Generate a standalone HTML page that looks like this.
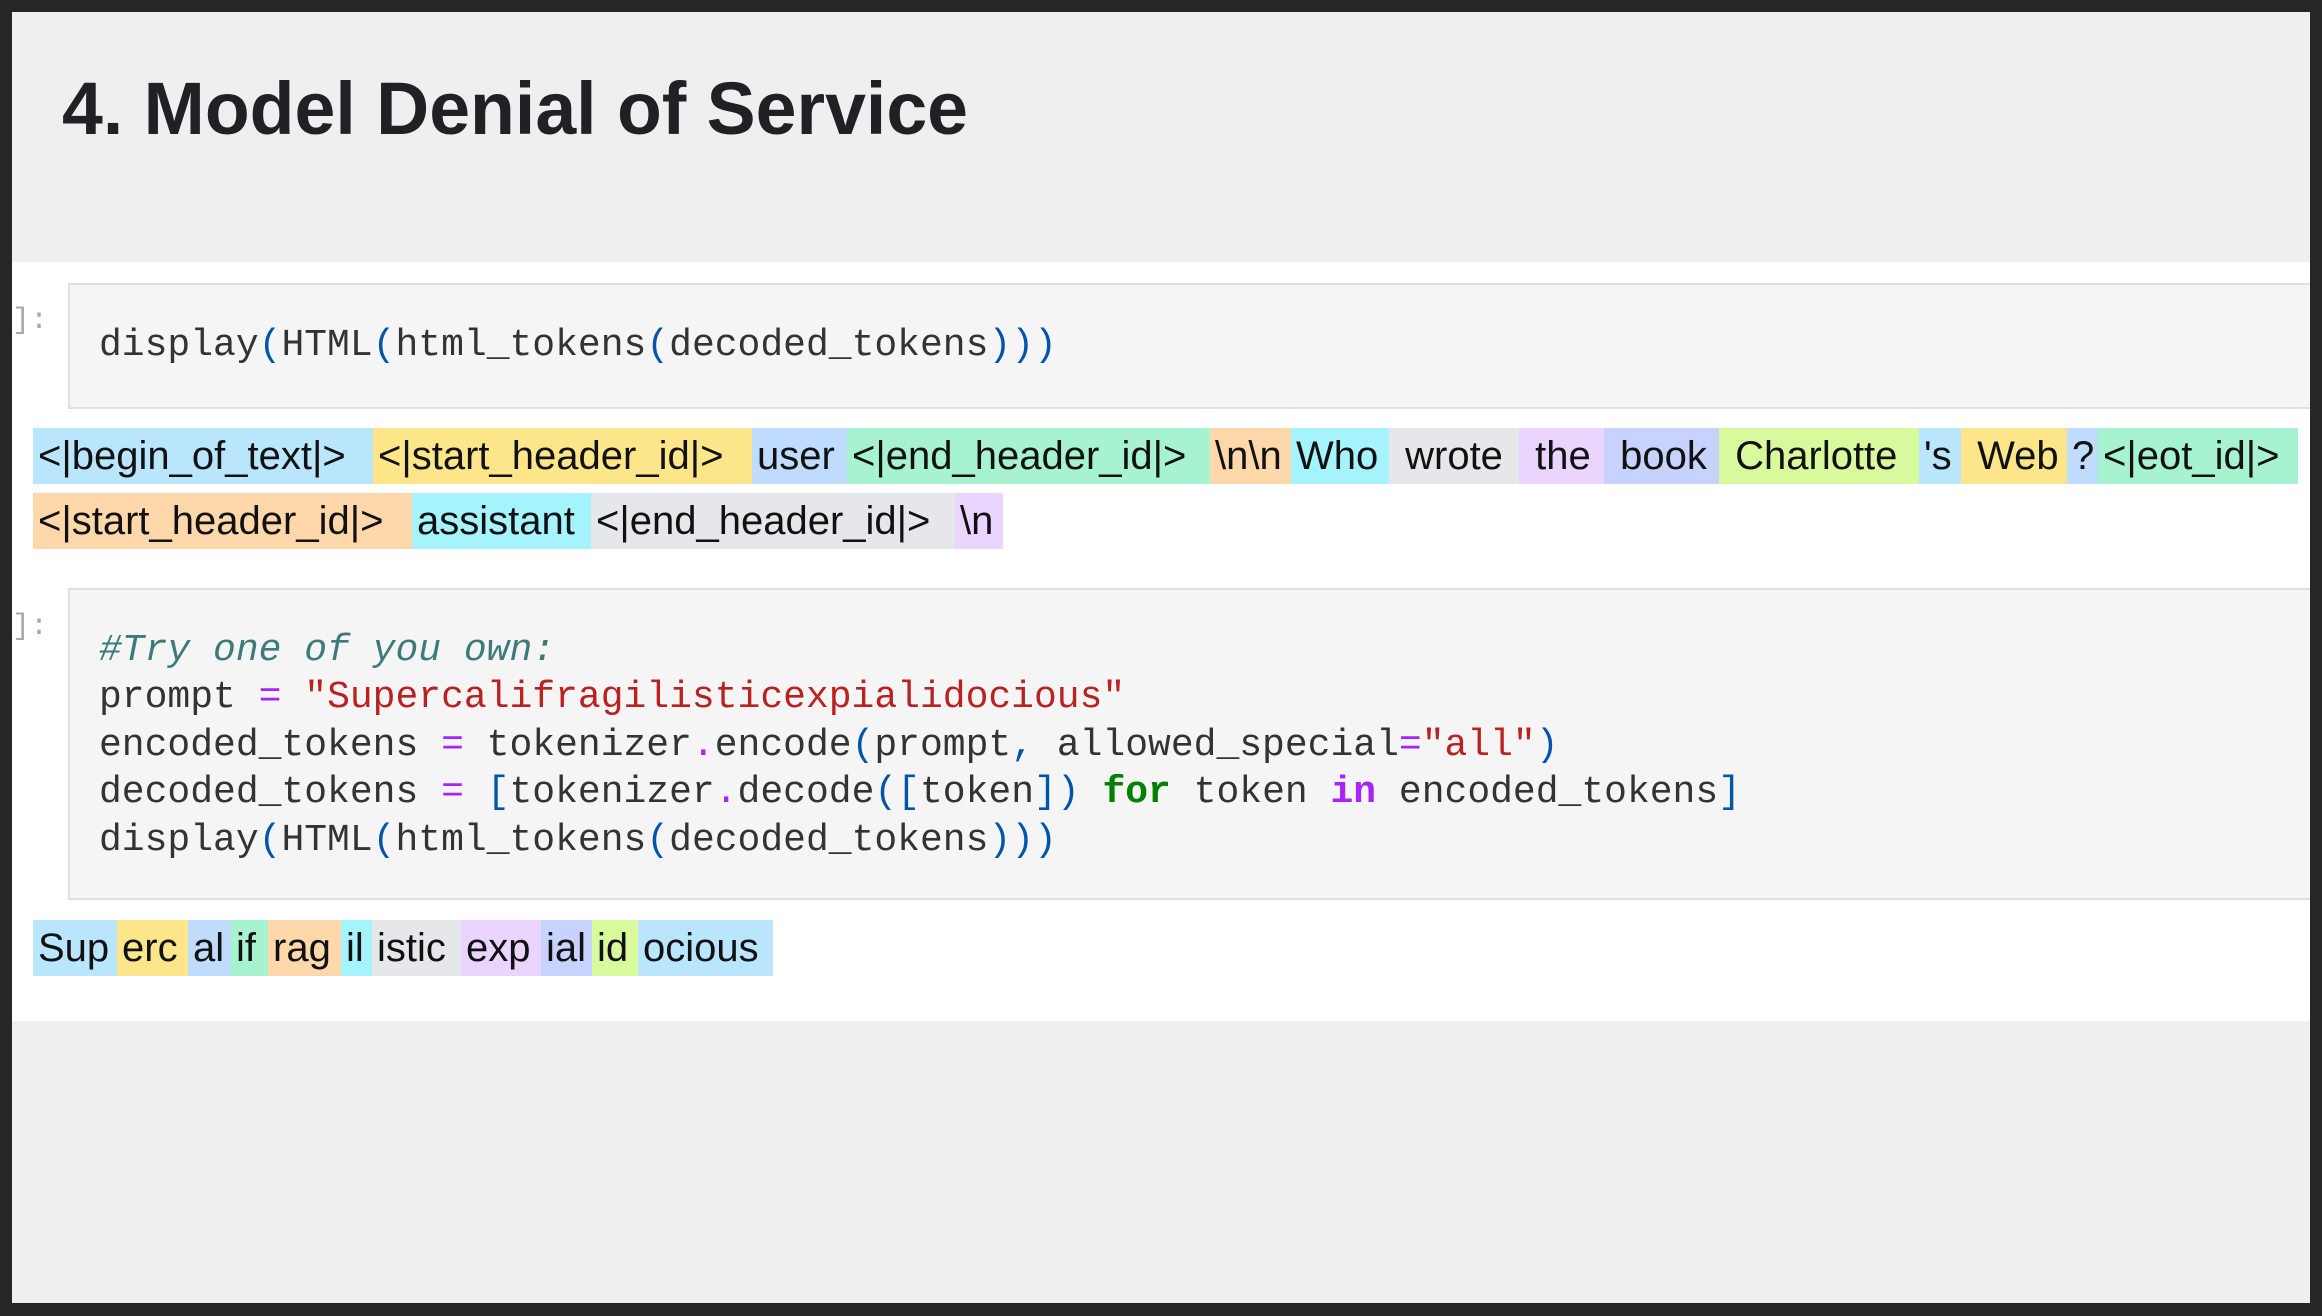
<!DOCTYPE html>
<html><head><meta charset="utf-8">
<style>
html,body{margin:0;padding:0;}
body{width:2322px;height:1316px;background:#262626;position:relative;overflow:hidden;font-family:"Liberation Sans",sans-serif;}
#page{position:absolute;left:12px;top:12px;width:2298px;height:1291px;background:#efefef;overflow:hidden;}
#white{position:absolute;left:0;top:250px;width:2298px;height:759px;background:#fff;}
.cell{position:absolute;left:56px;width:2300px;background:#f5f5f5;border:2px solid #e0e0e0;box-sizing:border-box;}
.code{position:absolute;left:87px;font-family:"Liberation Mono",monospace;font-size:38px;color:#333;white-space:pre;line-height:47.4px;}
.p{color:#0055aa}.o{color:#aa22ff}.s{color:#ba2121}.c{color:#3d7b7b;font-style:italic}.k{color:#008000;font-weight:bold}.ko{color:#aa22ff;font-weight:bold}
.row{position:absolute;height:56px;}
.row span{position:absolute;top:0;height:56px;line-height:56px;font-size:40px;color:#111;white-space:pre;overflow:hidden;text-align:left;padding-left:5px;box-sizing:border-box;}
.a{background:#bae6fd}.b{background:#fde68a}.d{background:#bfdbfe}.e{background:#a7f3d0}.f{background:#fed7aa}.g{background:#a5f3fc}.h{background:#e5e7eb}.i{background:#e9d5ff}.j{background:#c7d2fe}.l{background:#d9f99d}
.pr{position:absolute;left:0;font-size:30px;color:#aaa;font-family:"Liberation Mono",monospace;}
</style></head><body>
<div id="page">
<svg style="position:absolute;left:0;top:0" width="1200" height="200"><text x="50" y="122" textLength="906" lengthAdjust="spacingAndGlyphs" font-family="Liberation Sans" font-weight="bold" font-size="74" fill="#202124">4. Model Denial of Service</text></svg>
<div id="white"></div>
<div class="cell" style="top:271px;height:126px;"></div>
<div class="pr" style="top:292px;">]:</div>
<div class="code" style="top:310px;">display<span class="p">(</span>HTML<span class="p">(</span>html_tokens<span class="p">(</span>decoded_tokens<span class="p">)))</span></div>

<div class="row" style="top:416px;left:0;">
<span class="a" style="left:21px;width:340px">&lt;|begin_of_text|&gt;</span>
<span class="b" style="left:361px;width:379px">&lt;|start_header_id|&gt;</span>
<span class="d" style="left:740px;width:95px">user</span>
<span class="e" style="left:835px;width:363px">&lt;|end_header_id|&gt;</span>
<span class="f" style="left:1198px;width:81px">\n\n</span>
<span class="g" style="left:1279px;width:98px">Who</span>
<span class="h" style="left:1377px;width:130px"> wrote</span>
<span class="i" style="left:1507px;width:85px"> the</span>
<span class="j" style="left:1592px;width:115px"> book</span>
<span class="l" style="left:1707px;width:200px"> Charlotte</span>
<span class="a" style="left:1907px;width:42px">'s</span>
<span class="b" style="left:1949px;width:106px"> Web</span>
<span class="d" style="left:2055px;width:31px">?</span>
<span class="e" style="left:2086px;width:200px">&lt;|eot_id|&gt;</span>
</div>
<div class="row" style="top:481px;left:0;">
<span class="f" style="left:21px;width:379px">&lt;|start_header_id|&gt;</span>
<span class="g" style="left:400px;width:179px">assistant</span>
<span class="h" style="left:579px;width:364px">&lt;|end_header_id|&gt;</span>
<span class="i" style="left:943px;width:48px">\n</span>
</div>

<div class="cell" style="top:576px;height:312px;"></div>
<div class="pr" style="top:598px;">]:</div>
<div class="code" style="top:615px;"><span class="c">#Try one of you own:</span>
prompt <span class="o">=</span> <span class="s">"Supercalifragilisticexpialidocious"</span>
encoded_tokens <span class="o">=</span> tokenizer<span class="o">.</span>encode<span class="p">(</span>prompt<span class="p">,</span> allowed_special<span class="o">=</span><span class="s">"all"</span><span class="p">)</span>
decoded_tokens <span class="o">=</span> <span class="p">[</span>tokenizer<span class="o">.</span>decode<span class="p">([</span>token<span class="p">])</span> <span class="k">for</span> token <span class="ko">in</span> encoded_tokens<span class="p">]</span>
display<span class="p">(</span>HTML<span class="p">(</span>html_tokens<span class="p">(</span>decoded_tokens<span class="p">)))</span></div>

<div class="row" style="top:908px;left:0;">
<span class="a" style="left:21px;width:84px">Sup</span>
<span class="b" style="left:105px;width:71px">erc</span>
<span class="d" style="left:176px;width:43px">al</span>
<span class="e" style="left:219px;width:37px">if</span>
<span class="f" style="left:256px;width:73px">rag</span>
<span class="g" style="left:329px;width:31px">il</span>
<span class="h" style="left:360px;width:89px">istic</span>
<span class="i" style="left:449px;width:80px">exp</span>
<span class="j" style="left:529px;width:51px">ial</span>
<span class="l" style="left:580px;width:46px">id</span>
<span class="a" style="left:626px;width:135px">ocious</span>
</div>
</div>
</body></html>
